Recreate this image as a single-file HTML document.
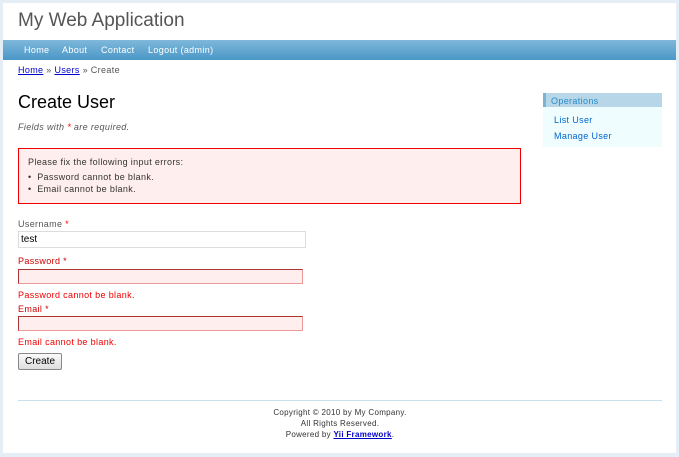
<!DOCTYPE html>
<html><head><style>
body{margin:0;width:679px;height:457px;background:#e5eef4;font-family:"Liberation Sans",sans-serif;position:relative;overflow:hidden}
#c{position:absolute;left:3px;top:3px;width:673px;height:450px;background:#fff}
.a{position:absolute;white-space:nowrap}
.s{font-size:9px;letter-spacing:0.35px}
a{color:#06c}
</style></head><body>
<div id="c"></div>
<div class="a" style="left:18px;top:10px;font-size:19px;color:#555">My Web Application</div>
<div class="a" style="left:3px;top:40px;width:673px;height:20px;background:linear-gradient(#7fb8da,#4a97c7)"></div>
<div class="a s" style="left:24px;top:45px;color:#fff">Home</div>
<div class="a s" style="left:62px;top:45px;color:#fff">About</div>
<div class="a s" style="left:101px;top:45px;color:#fff">Contact</div>
<div class="a s" style="left:148px;top:45px;color:#fff">Logout (admin)</div>
<div class="a s" style="left:18px;top:65px;color:#555"><a style="color:#00c" href="#">Home</a> » <a style="color:#00c" href="#">Users</a> » Create</div>
<div class="a" style="left:18px;top:92px;font-size:18px;color:#000">Create User</div>
<div class="a s" style="left:18px;top:122px;font-style:italic;color:#555">Fields with <span style="color:red">*</span> are required.</div>
<div class="a" style="left:18px;top:148px;width:501px;height:54px;border:1px solid #e00;background:#ffeeee"></div>
<div class="a s" style="left:28px;top:157px;color:#333">Please fix the following input errors:</div>
<div class="a s" style="left:28px;top:172px;color:#333">•&nbsp; Password cannot be blank.</div>
<div class="a s" style="left:28px;top:184px;color:#333">•&nbsp; Email cannot be blank.</div>
<div class="a s" style="left:18px;top:219px;color:#555">Username <span style="color:red">*</span></div>
<div class="a" style="left:18px;top:231px;width:286px;height:15px;border:1px solid #ddd;font-size:10px;line-height:15px;text-indent:2px">test</div>
<div class="a s" style="left:18px;top:256px;color:#c00">Password <span>*</span></div>
<div class="a" style="left:18px;top:269px;width:283px;height:13px;border:1px solid #c33;border-color:#a33 #e99 #e99 #a33;background:#feeeee"></div>
<div class="a s" style="left:18px;top:290px;color:#e00">Password cannot be blank.</div>
<div class="a s" style="left:18px;top:304px;color:#c00">Email *</div>
<div class="a" style="left:18px;top:316px;width:283px;height:13px;border:1px solid #c33;border-color:#a33 #e99 #e99 #a33;background:#feeeee"></div>
<div class="a s" style="left:18px;top:337px;color:#e00">Email cannot be blank.</div>
<div class="a" style="left:18px;top:353px;width:42px;height:15px;border:1px solid #888;border-radius:2px;background:linear-gradient(#fafafa,#ddd);font-size:10px;line-height:15px;text-align:center">Create</div>
<div class="a" style="left:543px;top:93px;width:119px;height:54px;background:#effdff"></div>
<div class="a" style="left:543px;top:93px;width:116px;height:14px;background:#b7d6e7;border-left:3px solid #7eb2d1"></div>
<div class="a s" style="left:551px;top:96px;color:#298dcd">Operations</div>
<div class="a s" style="left:554px;top:115px;color:#06c">List User</div>
<div class="a s" style="left:554px;top:131px;color:#06c">Manage User</div>
<div class="a" style="left:18px;top:400px;width:644px;height:1px;background:#c9e0ed"></div>
<div class="a" style="left:18px;top:407px;width:644px;text-align:center;font-size:8px;line-height:11px;color:#333;letter-spacing:0.3px">Copyright © 2010 by My Company.<br>All Rights Reserved.<br>Powered by <a style="color:#00c;font-weight:bold" href="#">Yii Framework</a>.</div>
</body></html>
